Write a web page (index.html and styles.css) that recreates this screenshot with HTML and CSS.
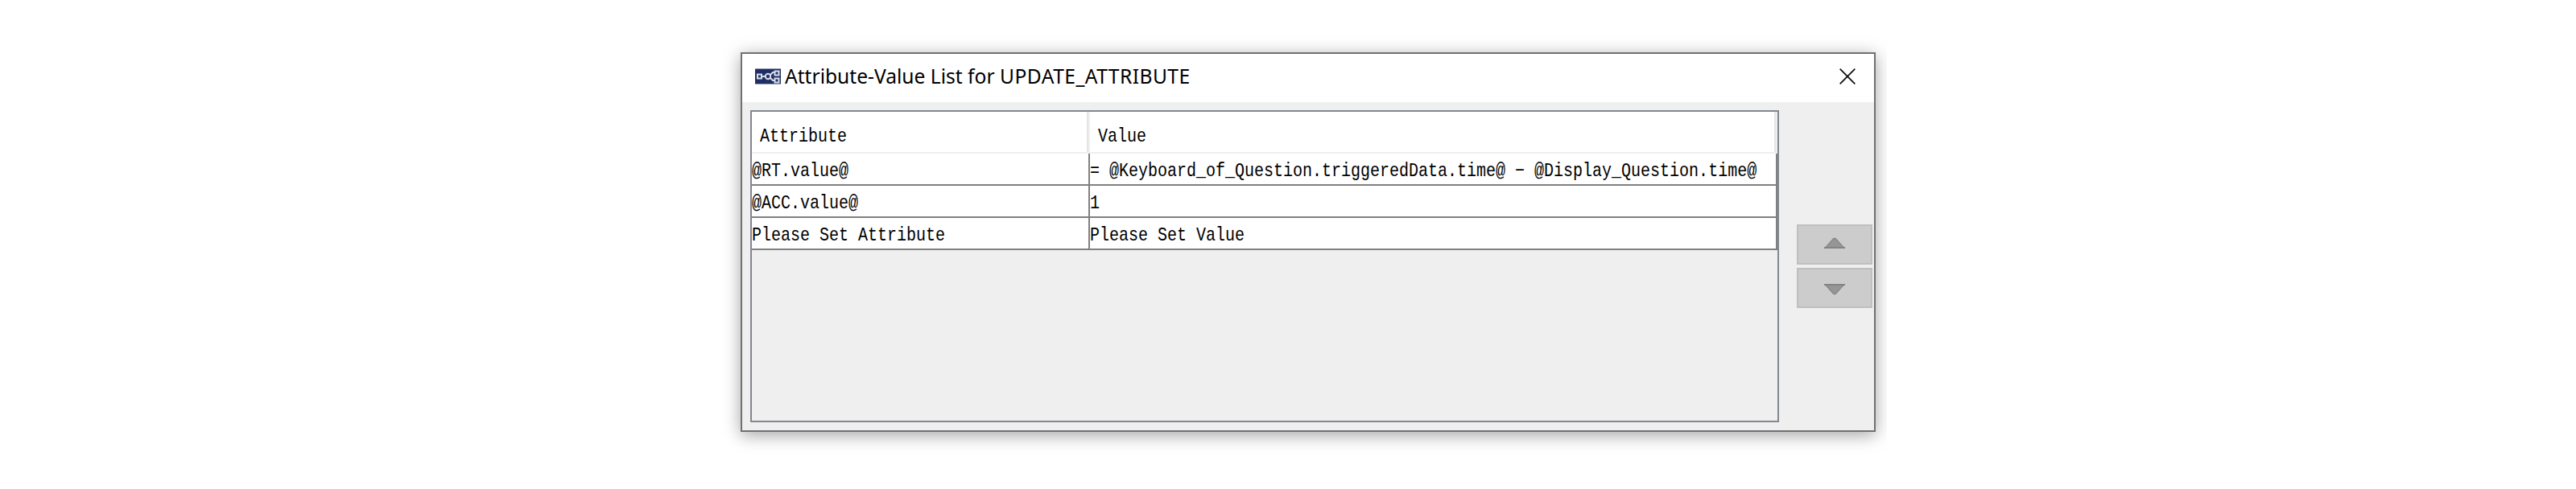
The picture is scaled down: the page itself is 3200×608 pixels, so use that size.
FILE: index.html
```html
<!DOCTYPE html>
<html lang="en">
<head>
<meta charset="utf-8">
<title>Attribute-Value List for UPDATE_ATTRIBUTE</title>
<link rel="stylesheet" href="styles.css">
</head>
<body>
<div class="stage">
  <div class="window">
    <header class="titlebar">
      <svg class="app-icon" width="32" height="20" viewBox="0 0 32 20">
        <rect width="32" height="20" fill="#1f2f63"/>
        <path d="M0 .5H32M0 19.5H32" stroke="#8f98b5"/>
        <g fill="none" stroke="#d9deea" stroke-width="2">
          <rect x="3" y="7.500" width="5" height="5"/>
          <path d="M8 10h5M19 8l3-3h2M19 12l3 3h2"/>
          <circle cx="16" cy="10" r="3.200"/>
          <rect x="24.500" y="3.500" width="5" height="5"/>
          <rect x="24.500" y="12.500" width="5" height="5"/>
        </g>
      </svg>
      <h1 class="title">Attribute-Value List for <span class="name">UPDATE_ATTRIBUTE</span></h1>
      <svg class="close" width="20" height="20" viewBox="0 0 20 20"><path d="M.7.700 19.300 19.300M19.300.700.700 19.300" stroke="#111" stroke-width="1.800"/></svg>
    </header>
    <main class="content">
      <div class="scroll-pane">
        <div class="row head"><div class="cell"><span class="text">Attribute</span></div><div class="cell"><span class="text">Value</span></div></div>
        <div class="row"><div class="cell"><span class="text">@RT.value@</span></div><div class="cell"><span class="text">= @Keyboard_of_Question.triggeredData.time@ − @Display_Question.time@</span></div></div>
        <div class="row"><div class="cell"><span class="text">@ACC.value@</span></div><div class="cell"><span class="text">1</span></div></div>
        <div class="row"><div class="cell"><span class="text">Please Set Attribute</span></div><div class="cell"><span class="text">Please Set Value</span></div></div>
      </div>
      <div class="buttons">
        <div class="button up"><svg width="26" height="14" viewBox="0 0 26 14"><path d="M1.500 13 11.500 1h3L24.500 13Z" fill="#969696"/><path d="M1.500 13 12 1.500h2L24.500 13" fill="none" stroke="#8a8a8a" stroke-width="1.500"/><path d="M0 12h26v2H0z" fill="#848484"/></svg></div>
        <div class="button down"><svg width="26" height="14" viewBox="0 0 26 14"><path d="M1.500 1 11.500 13h3L24.500 1Z" fill="#969696"/><path d="M1.500 1 12 12.500h2L24.500 1" fill="none" stroke="#8a8a8a" stroke-width="1.500"/><path d="M0 0h26v2H0z" fill="#848484"/></svg></div>
      </div>
    </main>
  </div>
</div>
</body>
</html>
```
FILE: styles.css
```css
* { box-sizing: border-box; }
body { margin: 0; background: #fff; }
svg { display: block; flex: none; }
.stage {
  width: 2344px;
  height: 608px;
  padding: 65px 14px 0 920px;
  overflow: hidden;
}
.window {
  width: 1410px;
  height: 472px;
  border: 2px solid #707070;
  background: #efefef;
  box-shadow: 0 4px 20px rgba(0, 0, 0, .36);
}
.titlebar {
  display: flex;
  align-items: center;
  height: 60px;
  padding: 0 23px 4px 16px;
  background: #fff;
}
.title {
  flex: 1;
  margin: 0 0 0 5px;
  font: 400 24.6px/36px "Noto Sans", sans-serif;
  color: #000;
  white-space: nowrap;
}
.name { letter-spacing: .45px; }
.content {
  display: flex;
  justify-content: space-between;
  padding: 10px 2px 0 10px;
}
.scroll-pane {
  width: 1278px;
  height: 388px;
  border: 2px solid #828790;
}
.row {
  display: grid;
  grid-template-columns: 420px 854px;
  height: 40px;
}
.cell {
  border-right: 2px solid #808080;
  border-bottom: 2px solid #808080;
  background: #fff;
}
.head { height: 52px; }
.head .cell {
  padding: 9px 0 0 10px;
  border-color: #efefef;
  box-shadow: inset -2px 0 #e5e5e5;
}
.text {
  display: block;
  padding-top: 6px;
  font: 20px/30px "Liberation Mono", monospace;
  color: #000;
  white-space: pre;
  transform: scaleY(1.2);
}
.buttons {
  display: flex;
  flex-direction: column;
  gap: 4px;
  padding-top: 142px;
}
.button {
  display: flex;
  align-items: center;
  justify-content: center;
  width: 94px;
  height: 50px;
  border: 2px solid #bfbfbf;
  background: #ccc;
}
.up { padding-bottom: 4px; }
.down { padding-top: 4px; }
```
